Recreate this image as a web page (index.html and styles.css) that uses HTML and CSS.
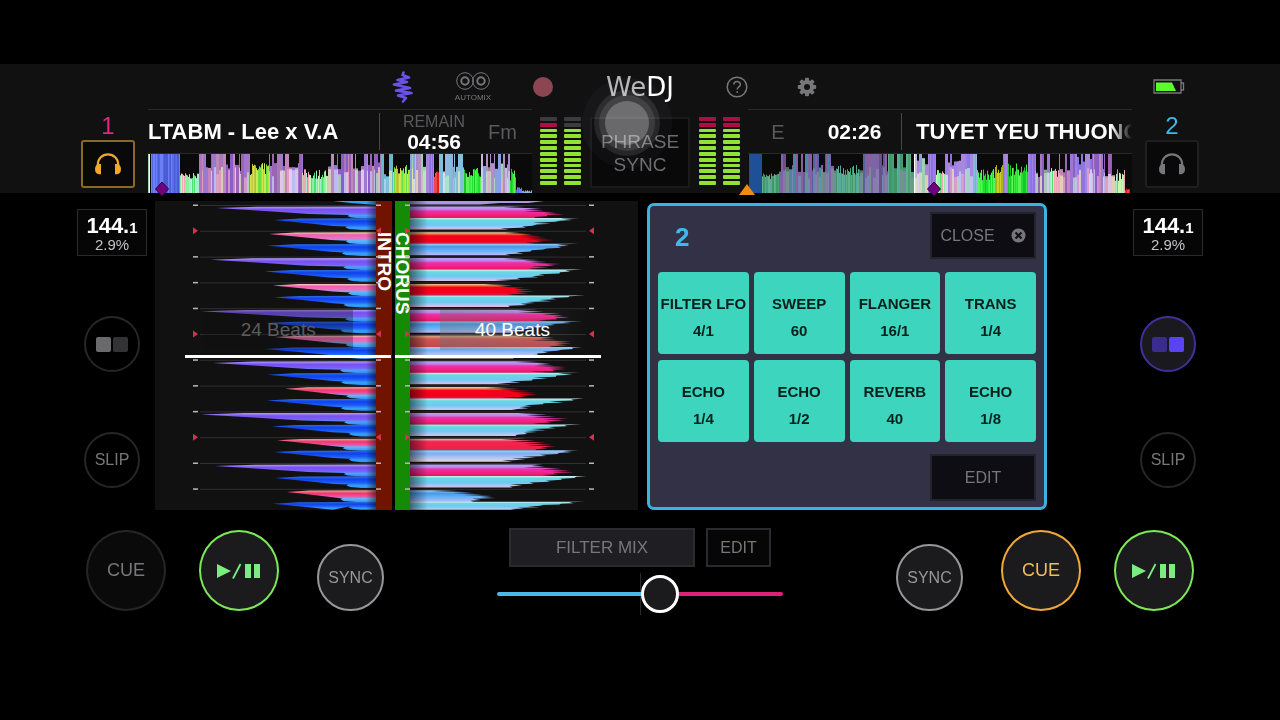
FILE: index.html
```html
<!DOCTYPE html>
<html lang="en">
<head>
    <meta charset="UTF-8">
    <meta name="viewport" content="width=device-width, initial-scale=1.0">
    <title>WeDJ</title>
    <link rel="stylesheet" href="styles.css">
</head>
<body>
    <!-- Shared icons -->
    <svg class="sprite" aria-hidden="true">
        <symbol id="icon-headphones" viewBox="0 0 26 22">
            <path d="M3.500 14 V11.500 A9.500 9.500 0 0 1 22.500 11.500 V14" fill="none" stroke="currentColor" stroke-width="2"/>
            <path d="M6.500 11 V20.500 H5 A4 4 0 0 1 1 16.500 V15 A4 4 0 0 1 5 11 Z M19.500 11 V20.500 H21 A4 4 0 0 0 25 16.500 V15 A4 4 0 0 0 21 11 Z" fill="currentColor"/>
        </symbol>
        <symbol id="icon-play" viewBox="0 0 44 16">
            <path d="M0 1 L14 8 L0 15 Z M28 1 h6 v14 h-6 Z M37 1 h6 v14 h-6 Z" fill="currentColor"/>
            <path d="M16 15.500 L23.500 1" stroke="currentColor" stroke-width="1.800"/>
        </symbol>
    </svg>

    <header class="top">
        <nav class="toolbar">
            <div class="tools tools-left">
                <button class="tool" aria-label="Waveform">
                    <svg width="22" height="32" viewBox="0 0 22 32"><path d="M11.500 1.500 L10.500 4 L17 6.500 L5.500 9 L15 11 L2 13.500 L18 17 L4 19.500 L19.500 22 L6 24.500 L14 27 L11 30.500" fill="none" stroke="#6a52e8" stroke-width="2.600" stroke-linejoin="round" stroke-linecap="round"/></svg>
                </button>
                <button class="tool automix">
                    <svg width="34" height="20" viewBox="0 0 34 20" fill="none" stroke="#77777a"><circle cx="9" cy="10" r="8.300"/><circle cx="25" cy="10" r="8.300"/><circle cx="9" cy="10" r="3.700" stroke-width="2"/><circle cx="25" cy="10" r="3.700" stroke-width="2"/></svg>
                    <span>AUTOMIX</span>
                </button>
                <button class="tool" aria-label="Record"><span class="record"></span></button>
            </div>
            <h1 class="logo">We<span>DJ</span></h1>
            <div class="tools">
                <button class="tool" aria-label="Help">
                    <svg width="22" height="22" viewBox="0 0 22 22" fill="none" stroke="#77777a" stroke-width="1.500"><circle cx="11" cy="11" r="9.800"/><path d="M7.800 8.600 C7.800 4.600 14.400 4.600 14.400 8.500 C14.400 10.800 11.200 11 11.200 13.600"/><path d="M11.200 15.300 v1.800"/></svg>
                </button>
                <button class="tool" aria-label="Settings">
                    <svg width="20" height="20" viewBox="-10 -10 20 20"><g fill="#77777a"><rect x="-2" y="-9.200" width="4" height="18.400" rx="1"/><rect x="-2" y="-9.200" width="4" height="18.400" rx="1" transform="rotate(45)"/><rect x="-2" y="-9.200" width="4" height="18.400" rx="1" transform="rotate(90)"/><rect x="-2" y="-9.200" width="4" height="18.400" rx="1" transform="rotate(135)"/><circle r="7"/></g><circle r="3" fill="#111112"/></svg>
                </button>
                <svg class="battery" width="32" height="16" viewBox="0 0 32 16"><path d="M1 1 h27 v13 h-27 Z M28 4 h2.500 v7 h-2.500" fill="none" stroke="#77777a" stroke-width="1.300"/><path d="M3 3.500 h16 l4 8.500 h-20 Z" fill="#5dfc2e"/></svg>
            </div>
        </nav>

        <div class="monitor monitor-1">
            <span class="deck-number">1</span>
            <button class="phones active" aria-label="Monitor deck 1"><svg width="28" height="24"><use href="#icon-headphones"/></svg></button>
        </div>

        <section class="track track-1">
            <div class="info">
                <h2 class="title">LTABM - Lee x V.A</h2>
                <div class="time"><small>REMAIN</small>04:56</div>
                <div class="key">Fm</div>
            </div>
            <svg class="overview" id="overview-1" viewBox="0 0 384 39" preserveAspectRatio="none"></svg>
        </section>

        <div class="mixer">
            <div class="meter" data-levels="or oo"></div>
            <button class="phrase">PHRASE SYNC</button>
            <div class="meter" data-levels="rr rr"></div>
            <span class="touch"></span>
        </div>

        <section class="track track-2">
            <div class="info">
                <div class="key">E</div>
                <div class="time">02:26</div>
                <h2 class="title">TUYET YEU THUONG</h2>
            </div>
            <svg class="overview" id="overview-2" viewBox="0 0 384 39" preserveAspectRatio="none"></svg>
        </section>

        <div class="monitor monitor-2">
            <span class="deck-number">2</span>
            <button class="phones" aria-label="Monitor deck 2"><svg width="28" height="24"><use href="#icon-headphones"/></svg></button>
        </div>
    </header>

    <main class="decks">
        <aside class="side">
            <div class="bpm"><strong>144.<small>1</small></strong>2.9%</div>
            <button class="round" aria-label="Deck 1 pads"><span class="pad-icon"></span></button>
            <button class="round">SLIP</button>
        </aside>

        <section class="waves">
            <svg class="wave" id="wave-1" viewBox="0 0 221 309" preserveAspectRatio="none"></svg>
            <div class="phase intro">INTRO</div>
            <div class="phase chorus">CHORUS</div>
            <svg class="wave" id="wave-2" viewBox="0 0 228 309" preserveAspectRatio="none"></svg>
            <div class="beats beats-1">24 Beats</div>
            <div class="beats beats-2">40 Beats</div>
        </section>

        <section class="panel">
            <div class="panel-row">
                <h3>2</h3>
                <button class="dark">CLOSE
                    <svg width="15" height="15" viewBox="0 0 15 15"><circle cx="7.500" cy="7.500" r="7" fill="#77777a"/><path d="M4.500 4.500 L10.500 10.500 M10.500 4.500 L4.500 10.500" stroke="#0e0d13" stroke-width="2"/></svg>
                </button>
            </div>
            <div class="pads">
                <button>FILTER LFO<span>4/1</span></button>
                <button>SWEEP<span>60</span></button>
                <button>FLANGER<span>16/1</span></button>
                <button>TRANS<span>1/4</span></button>
                <button>ECHO<span>1/4</span></button>
                <button>ECHO<span>1/2</span></button>
                <button>REVERB<span>40</span></button>
                <button>ECHO<span>1/8</span></button>
            </div>
            <div class="panel-row panel-end">
                <button class="dark">EDIT</button>
            </div>
        </section>

        <aside class="side side-right">
            <div class="bpm"><strong>144.<small>1</small></strong>2.9%</div>
            <button class="round selected" aria-label="Deck 2 pads"><span class="pad-icon"></span></button>
            <button class="round">SLIP</button>
        </aside>
    </main>

    <footer class="transport">
        <div class="buttons">
            <button class="big">CUE</button>
            <button class="big play" aria-label="Play or pause deck 1"><svg width="44" height="16"><use href="#icon-play"/></svg></button>
            <button class="sync">SYNC</button>
        </div>
        <div class="fader">
            <div class="fader-buttons">
                <button class="filter">FILTER MIX</button>
                <button class="edit">EDIT</button>
            </div>
            <input type="range" id="crossfader" min="0" max="100" value="58" aria-label="Crossfader">
        </div>
        <div class="buttons buttons-right">
            <button class="sync">SYNC</button>
            <button class="big cue-on">CUE</button>
            <button class="big play" aria-label="Play or pause deck 2"><svg width="44" height="16"><use href="#icon-play"/></svg></button>
        </div>
    </footer>

    <script src="script.js"></script>
</body>
</html>
```

FILE: styles.css
```css
* {
    box-sizing: border-box;
}
body {
    margin: 0;
    padding-top: 64px;
    background-color: #000;
    color: #fff;
    font-family: "Liberation Sans", Arial, sans-serif;
    font-size: 18px;
}
button {
    margin: 0;
    padding: 0;
    border: 0;
    background: none;
    color: #77777a;
    font-family: inherit;
    font-size: 18px;
    cursor: pointer;
}
h1, h2, h3 {
    margin: 0;
}
svg {
    display: block;
}
.sprite {
    position: absolute;
    width: 0;
    height: 0;
}

/* Header */
.top {
    display: grid;
    grid-template-columns: 148px minmax(0, 1fr) 216px minmax(0, 1fr) 148px;
    grid-template-rows: 45px 84px;
    background-color: #111112;
}
.toolbar {
    grid-column: 1 / -1;
    display: grid;
    grid-template-columns: 1fr 124px 1fr;
    align-items: center;
}
.tools {
    display: flex;
    align-items: center;
}
.tools-left {
    justify-content: flex-end;
}
.tool {
    display: flex;
    flex-direction: column;
    align-items: center;
    width: 70px;
}
.automix {
    font-size: 8px;
    gap: 2px;
}
.record {
    width: 20px;
    height: 20px;
    border-radius: 50%;
    background-color: #8c4652;
}
.logo {
    color: #b5b5b8;
    font-family: "DejaVu Sans", sans-serif;
    font-size: 26px;
    font-weight: normal;
    line-height: 28px;
    text-align: center;
}
.logo span {
    color: #fff;
}
.battery {
    margin-left: auto;
    margin-right: 95px;
}
.monitor {
    display: flex;
    flex-direction: column;
    align-items: center;
    width: 80px;
    padding-top: 3px;
}
.monitor-1 {
    justify-self: end;
    color: #e0287e;
}
.monitor-2 {
    color: #3fb8e8;
}
.deck-number {
    font-size: 24px;
    line-height: 28px;
}
.phones {
    display: flex;
    align-items: center;
    justify-content: center;
    width: 54px;
    height: 48px;
    border: 2px solid #1f1f22;
    border-radius: 3px;
    background-color: #09090a;
}
.phones.active {
    border-color: #8a6a22;
    color: #f0a828;
}
.track {
    display: flex;
    flex-direction: column;
}
.info {
    display: grid;
    align-items: center;
    height: 45px;
    border-top: 1px solid #2a2a2c;
    border-bottom: 1px solid #2a2a2c;
}
.track-1 .info {
    grid-template-columns: 1fr 108px 28px 16px;
}
.track-2 .info {
    grid-template-columns: 60px 93px 1fr;
}
.title {
    overflow: hidden;
    padding-top: 1px;
    font-size: 22px;
    line-height: 36px;
    white-space: nowrap;
}
.track-1 .title {
    border-right: 1px solid #48484a;
}
.track-2 .title {
    padding-left: 14px;
    border-left: 1px solid #48484a;
    mask-image: linear-gradient(to right, #000 91%, transparent);
}
.time {
    font-size: 21px;
    font-weight: bold;
    line-height: 20px;
    text-align: center;
}
.time small {
    display: block;
    color: #5a5a5c;
    font-size: 16px;
    font-weight: normal;
}
.key {
    padding-top: 2px;
    color: #5a5a5c;
    font-size: 20px;
    text-align: center;
}
.overview {
    width: 100%;
    height: 39px;
    overflow: visible;
}
.mixer {
    position: relative;
    display: flex;
    justify-content: space-between;
    padding: 8px;
}
.meter {
    display: flex;
    gap: 7px;
}
.meter div {
    display: flex;
    flex-direction: column;
    gap: 2px;
}
.meter i {
    width: 17px;
    height: 4px;
    border-radius: 1px;
    background-color: #92e234;
}
.meter .red {
    background-color: #b00d48;
}
.meter .off {
    background-color: #3c3c3e;
}
.phrase {
    width: 100px;
    height: 71px;
    border: 2px solid #1a1a1c;
    background-color: #09090a;
    color: #6c6c6e;
    font-size: 19px;
    line-height: 23px;
}
.touch {
    position: absolute;
    left: 73px;
    top: -8px;
    width: 44px;
    height: 44px;
    border-radius: 50%;
    background-color: #646466;
    box-shadow: 0 0 0 6px #343436, 0 0 0 11px #1e1e20, 0 0 0 23px #060607;
    mix-blend-mode: screen;
    pointer-events: none;
}

/* Decks */
.decks {
    display: grid;
    grid-template-columns: 155px minmax(0, 483fr) minmax(0, 409fr) 233px;
    padding-top: 8px;
}
.side {
    display: flex;
    flex-direction: column;
    align-items: center;
    gap: 60px;
    width: 70px;
    margin-left: 77px;
    padding-top: 8px;
}
.side-right {
    justify-self: end;
    margin-right: 77px;
}
.bpm {
    width: 70px;
    height: 47px;
    padding-top: 7px;
    border: 1px solid #2a2a2c;
    background-color: #060607;
    color: #c4c4c6;
    font-size: 15px;
    line-height: 15px;
    text-align: center;
}
.bpm strong {
    display: block;
    color: #fff;
    font-size: 22px;
    line-height: 18px;
}
.bpm small {
    font-size: 15px;
}
.round {
    display: flex;
    align-items: center;
    justify-content: center;
    width: 56px;
    height: 56px;
    border: 2px solid #262628;
    border-radius: 50%;
    font-size: 16px;
}
.pad-icon {
    display: flex;
    gap: 2px;
}
.pad-icon::before, .pad-icon::after {
    content: "";
    width: 15px;
    height: 15px;
    border-radius: 2px;
    background-color: #6a6a6c;
}
.pad-icon::after {
    background-color: #333335;
}
.selected {
    border-color: #42309a;
    background-color: #1a191f;
}
.selected .pad-icon::before {
    background-color: #392c8c;
}
.selected .pad-icon::after {
    background-color: #5a42f5;
}
.waves {
    position: relative;
    display: grid;
    grid-template-columns: minmax(0, 221fr) 16px 18px minmax(0, 228fr);
    background-color: #111112;
}
.wave {
    position: relative;
    z-index: 1;
    width: 100%;
    height: 309px;
    overflow: visible;
}
.phase {
    padding-top: 31px;
    font-size: 19px;
    font-weight: bold;
    line-height: 15px;
    writing-mode: vertical-rl;
}
.intro {
    background-color: #701400;
}
.chorus {
    border-left: 3px solid #000;
    background-color: #148a05;
}
.beats {
    position: absolute;
    z-index: 2;
    top: 109px;
    height: 40px;
    font-size: 19px;
    line-height: 40px;
    text-align: center;
}
.beats-1 {
    left: 10%;
    width: 31%;
    background-color: rgba(17, 17, 18, 0.3);
    color: #5c5c5e;
}
.beats-2 {
    left: 59%;
    width: 30%;
    background: linear-gradient(to right, rgba(110, 110, 115, 0.4), rgba(60, 60, 65, 0));
}
/* The playhead runs over both decks */
.playhead {
    fill: #fff;
}

/* Pad effects */
.panel {
    display: flex;
    flex-direction: column;
    justify-content: space-between;
    margin: 2px 0 0 9px;
    padding: 6px 8px;
    border: 3px solid #3cb2e0;
    border-radius: 7px;
    background-color: #323145;
}
.panel-row {
    display: flex;
    align-items: center;
    justify-content: space-between;
}
.panel-end {
    justify-content: flex-end;
}
.panel h3 {
    padding: 3px 0 0 17px;
    color: #3fb8f0;
    font-size: 26px;
}
.dark {
    display: flex;
    align-items: center;
    justify-content: center;
    gap: 16px;
    width: 106px;
    height: 47px;
    border: 2px solid #24232c;
    background-color: #0e0d13;
    font-size: 16px;
}
.pads {
    display: grid;
    grid-template-columns: repeat(4, 1fr);
    gap: 6px 5px;
}
.pads button {
    height: 82px;
    padding-top: 8px;
    border-radius: 4px;
    background-color: #3ed5be;
    color: #08201c;
    font-size: 15px;
    font-weight: bold;
    line-height: 27px;
    white-space: nowrap;
}
.pads span {
    display: block;
}

/* Transport */
.transport {
    display: grid;
    grid-template-columns: 1fr 286px 1fr;
    padding: 18px 86px 0;
}
.buttons {
    display: flex;
    align-items: flex-start;
    gap: 33px;
    padding-top: 2px;
}
.buttons-right {
    justify-content: flex-end;
}
.big {
    display: flex;
    align-items: center;
    justify-content: center;
    width: 80px;
    height: 81px;
    border: 2px solid #262628;
    border-radius: 50%;
    background-color: #0a0a0b;
}
.play {
    border-color: #7ce858;
    background-color: #1b1b1d;
    color: #7cec80;
}
.cue-on {
    border-color: #f0a838;
    background-color: #1b1b1d;
    color: #f0bc60;
}
.sync {
    width: 67px;
    height: 67px;
    margin: 14px 0 0 5px;
    border: 2px solid #98989a;
    border-radius: 50%;
    background-color: #1b1b1d;
    color: #98989a;
    font-size: 16px;
}
.buttons-right .sync {
    margin: 14px 5px 0 0;
}
.fader-buttons {
    display: flex;
    gap: 11px;
    padding: 0 12px;
}
.filter, .edit {
    height: 39px;
    border: 2px solid #2b2b2f;
}
.filter {
    flex: 1;
    background-color: #1f1e23;
    font-size: 17px;
}
.edit {
    width: 65px;
    background-color: #060607;
    font-size: 16px;
}
#crossfader {
    display: block;
    width: 100%;
    height: 42px;
    margin: 6px 0 0;
    appearance: none;
    background: linear-gradient(#2a2a2c, #2a2a2c) 50% 0 / 1px 100% no-repeat;
}
#crossfader::-webkit-slider-runnable-track {
    height: 4px;
    border-radius: 2px;
    background: linear-gradient(to right, #4cb8ea 57%, #e0217a 57%);
}
#crossfader::-webkit-slider-thumb {
    appearance: none;
    width: 38px;
    height: 38px;
    margin-top: -17px;
    border: 3px solid #fff;
    border-radius: 50%;
    background-color: #1b1b1d;
}
```

FILE: script.js
```js
// small seeded generator so the waveforms look the same on every load
let seed = 7;
function rnd() {
    seed = (seed * 16807) % 2147483647;
    return seed / 2147483647;
}

function pick(list) {
    return list[Math.floor(rnd() * list.length)];
}

const mixes = {
    blue: ['#5a6ee8', '#4c5cd6', '#6a80f4', '#5468e4'],
    purple: ['#9c64b4', '#a878b8', '#8c5cc8', '#c088b8', '#9c78d0'],
    pale: ['#c8b8dc', '#a888d0', '#b490c0', '#8ca0e0', '#a0d0b0'],
    green: ['#50e070', '#8cf09c', '#c8f8b0', '#f0a8b8', '#a0f0d0'],
    lime: ['#a8e838', '#d0e850', '#68e048', '#c4c83c'],
    vivid: ['#20e030', '#38f040', '#60f058', '#18c828'],
    yellow: ['#b8c820', '#ccd028', '#a8b418'],
    violet: ['#9070e0', '#a080e8', '#8c78e4', '#a888dc'],
    sky: ['#80c0d8', '#90b8e0', '#68b8c8', '#a0a8e0'],
    dimgreen: ['#48a078', '#60b088', '#409868', '#58a8a0'],
    dim: ['#70508c', '#8860a0', '#4888a0', '#7c64a8', '#5860a0'],
    red: ['#e02020', '#f04848'],
    navy: ['#1e5098']
};
const bright = ['#f4ecf8', '#f0a8c8', '#b8f4c0', '#f0f0b0', '#c8d8ff'];
const dull = ['#70a088', '#7098b8', '#8c88b0'];

// [start, end, lowest bar, highest bar, colours]
const overview1 = [
    [0, 2, 39, 39, 'pale'], [3, 32, 39, 39, 'blue'], [32, 51, 14, 20, 'green'],
    [51, 102, 24, 52, 'purple'], [102, 121, 18, 30, 'lime'], [121, 155, 26, 52, 'purple'],
    [155, 180, 14, 24, 'green'], [180, 233, 26, 52, 'purple'], [233, 245, 20, 48, 'sky'],
    [245, 262, 18, 28, 'lime'], [262, 278, 28, 52, 'pale'], [278, 286, 39, 39, 'violet'],
    [286, 291, 16, 22, 'red'], [291, 315, 24, 54, 'sky'], [315, 333, 16, 26, 'vivid'],
    [333, 362, 26, 54, 'pale'], [362, 368, 12, 26, 'vivid'], [368, 374, 3, 6, 'blue'], [374, 384, 1, 3, 'sky']
];
const overview2 = [
    [1, 14, 39, 39, 'navy'], [14, 31, 14, 20, 'dimgreen'], [31, 88, 24, 54, 'dim'],
    [88, 111, 18, 28, 'dimgreen'], [111, 140, 24, 52, 'dim'], [140, 167, 22, 46, 'dimgreen'],
    [167, 180, 30, 54, 'pale'], [180, 188, 39, 39, 'violet'], [188, 197, 18, 24, 'green'],
    [197, 225, 30, 60, 'violet'], [225, 229, 39, 39, 'sky'], [229, 247, 12, 24, 'vivid'],
    [247, 255, 20, 28, 'yellow'], [255, 260, 39, 39, 'violet'], [260, 280, 16, 30, 'vivid'],
    [280, 287, 39, 39, 'violet'], [287, 302, 20, 46, 'purple'], [302, 311, 16, 26, 'green'],
    [311, 327, 24, 54, 'purple'], [327, 344, 32, 60, 'violet'], [344, 367, 20, 54, 'purple'],
    [367, 377, 12, 24, 'green'], [377, 382, 2, 5, 'red']
];

function drawOverview(id, parts, marks, playedTo) {
    let out = '<rect width="384" height="39" fill="#0a0a0b"/>';
    parts.forEach(([from, to, low, high, mix]) => {
        let x = from;
        while (x < to) {
            // busy parts switch between full bars and short ones
            const busy = high > 44;
            const w = Math.min(to - x, busy ? pick([1, 2, 2, 3]) : 1);
            let h = low + rnd() * (high - low);
            if (busy) {
                h = rnd() < 0.65 ? 39 : low - 4 + rnd() * 9;
            }
            h = Math.min(39, h);
            out += `<rect x="${x}" y="${39 - h}" width="${w}" height="${h}" fill="${pick(mixes[mix])}"/>`;
            if (busy && rnd() > 0.45) {
                const b = 14 + rnd() * 12;
                out += `<rect x="${x}" y="${39 - b}" width="${w}" height="${b}" fill="${pick(x < playedTo ? dull : bright)}" opacity="0.7"/>`;
            }
            x += w;
        }
    });
    document.getElementById(id).innerHTML = out + marks;
}

function diamond(x) {
    return `<path d="M${x} 28 l6.500 7 l-6.500 7 l-6.500 -7 Z" fill="#700080" stroke="#30003a"/>`;
}

drawOverview('overview-1', overview1, '<rect x="1" width="1" height="39" fill="#fff"/>' + diamond(14), 0);
drawOverview('overview-2', overview2,
    '<rect x="166" width="1" height="39" fill="#fff"/>' + diamond(186) + '<path d="M-9 41 L-1 30 L7 41 Z" fill="#f08a10"/>', 166);

// Level meters: one letter for each of the top two lamps
document.querySelectorAll('.meter').forEach(meter => {
    meter.innerHTML = meter.dataset.levels.split(' ').map(top => {
        const lamps = [...top].map(c => `<i class="${c === 'r' ? 'red' : 'off'}"></i>`).join('');
        return `<div>${lamps}${'<i></i>'.repeat(10)}</div>`;
    }).join('');
});

// Beat grid
const BEAT = 25.8;
const FIRST = 4;
const barStarts = [1, 5, 9];

function gradient(id, stops) {
    return `<linearGradient id="${id}" x1="0" y1="0" x2="0" y2="1">` +
        stops.map(([at, color]) => `<stop offset="${at}" stop-color="${color}"/>`).join('') + '</linearGradient>';
}

function marker(i, x, y, dir) {
    if (barStarts.includes(i)) {
        return `<path d="M${x} ${y - 3.5} l${5 * dir} 3.5 l${-5 * dir} 3.5 Z" fill="#d83050"/>`;
    }
    return `<rect x="${dir > 0 ? x : x - 5}" y="${y - 0.5}" width="5" height="1.5" fill="#b8b8ba"/>`;
}

// Deck 1: the waves grow to the left, [tip, fill] for each beat
const beats1 = [
    [62, 'purple'], [114, 'pink'], [56, 'purple'], [118, 'pink'], [46, 'purple'], [120, 'pink'],
    [58, 'purple'], [130, 'rose'], [46, 'purple'], [122, 'rose'], [60, 'purple'], [132, 'rose']
];

function wedge(tip, y, h, fill) {
    const span = 221 - tip;
    const mid = 184 + rnd() * 10;
    return `<path d="M${tip} ${y + 1.6} L${tip + span * 0.25} ${y + 0.2} L221 ${y} V${y + h} H206 ` +
        `L${mid + 4} ${y + h - 1} L${mid} ${y + h - 2.5} L${mid + 2} ${y + h - 3.5} L${tip + span * 0.58} ${y + 7.6} L${tip + span * 0.3} ${y + 4.6} Z" fill="url(#${fill})"/>`;
}

let left = '<defs>' +
    gradient('purple', [[0, '#b8a0f8'], [0.25, '#7850f4'], [0.55, '#7a60f4'], [0.75, '#50a0f8'], [1, '#2888f8']]) +
    gradient('pink', [[0, '#f8d8b8'], [0.2, '#f060b0'], [0.5, '#f070c0'], [0.65, '#60b8f8'], [1, '#40a0f8']]) +
    gradient('rose', [[0, '#f0a890'], [0.25, '#f03870'], [0.5, '#f050a0'], [0.7, '#60b8f8'], [1, '#3090f8']]) +
    gradient('deep', [[0, '#3070e0'], [0.25, '#1040f0'], [0.55, '#1c60f8'], [0.8, '#38a0f8'], [1, '#2c90f0']]) +
    '<linearGradient id="edge1"><stop offset="0" stop-color="#000" stop-opacity="0"/><stop offset="1" stop-color="#000" stop-opacity="0.5"/></linearGradient></defs>' +
    '<path d="M178 0 H221 V4 L196 2 Z" fill="#38a0f0"/>';
beats1.forEach(([tip, fill], i) => {
    const y = FIRST + i * BEAT;
    left += `<rect x="45" y="${y}" width="176" height="1" fill="#303032"/>`;
    left += wedge(tip, y + 1.5, 12, fill);
    left += wedge(108 + rnd() * 12, y + 13.3, i === 11 ? 7.7 : 11.8, 'deep');
    left += marker(i, 38, y, 1) + marker(i, 226, y, -1);
});
left += '<rect x="211" width="10" height="309" fill="url(#edge1)"/>' +
    '<rect class="playhead" x="30" y="154" width="206" height="3"/>';
document.getElementById('wave-1').innerHTML = left;

// Deck 2: the waves grow to the right, [reach, first half, second half]
const beats2 = [
    [154, 'magenta', 'cyan'], [146, 'red', 'azure'], [152, 'magenta', 'cyan'], [132, 'red', 'cyan'],
    [164, 'magenta', 'azure'], [166, 'brick', 'lav'], [162, 'magenta', 'cyan'], [132, 'red', 'cyan'],
    [160, 'magenta', 'cyan'], [150, 'crimson', 'lav'], [164, 'magenta', 'cyan'], [84, 'azure', 'cyan']
];

function band(y, h, reach, peak, slope, fill) {
    const rows = 6;
    let edge = '';
    for (let r = 0; r <= rows; r++) {
        const t = r / rows;
        const x = reach - Math.abs(t - peak) * slope + (rnd() - 0.5) * 10;
        edge += ` L${x} ${y + t * h}`;
        if (r < rows) {
            edge += ` L${x - 10 - rnd() * 16} ${y + (t + 0.07) * h}`;
        }
    }
    return `<path d="M0 ${y}${edge} L0 ${y + h} Z" fill="url(#${fill})"/>`;
}

let right = '<defs>' +
    gradient('magenta', [[0, '#b8a8f4'], [0.25, '#c080e8'], [0.4, '#f030a8'], [0.75, '#f02080'], [1, '#e01858']]) +
    gradient('red', [[0, '#f0d8a0'], [0.2, '#f05030'], [0.3, '#f40018'], [0.8, '#f0001c'], [1, '#c83070']]) +
    gradient('crimson', [[0, '#f0c8c0'], [0.25, '#f02850'], [0.8, '#f02048'], [1, '#b83870']]) +
    gradient('brick', [[0, '#e0b088'], [0.3, '#cc5850'], [1, '#c04850']]) +
    gradient('cyan', [[0, '#d8f0f4'], [0.2, '#68d8e0'], [0.6, '#70c8f4'], [0.85, '#b0c8f4'], [1, '#f0b8d8']]) +
    gradient('azure', [[0, '#a0d0f4'], [0.25, '#4898e8'], [0.6, '#68b4f8'], [1, '#c0b8f8']]) +
    gradient('lav', [[0, '#a0d0f8'], [0.3, '#78b0f0'], [0.7, '#b8c8f4'], [1, '#e8d8c8']]) +
    '<linearGradient id="edge2"><stop offset="0" stop-color="#000" stop-opacity="0.5"/><stop offset="1" stop-color="#000" stop-opacity="0"/></linearGradient></defs>' +
    '<path d="M0 0 H134 L118 2 H90 L70 3.5 H0 Z" fill="#a898e0"/>';
beats2.forEach(([reach, first, second], i) => {
    const y = FIRST + i * BEAT;
    right += `<rect y="${y}" width="176" height="1" fill="#303032"/>`;
    right += band(y + 1.5, 11.6, reach, 0.6, 60, first);
    right += band(y + 13, i === 11 ? 8 : 11.5, 172, 0, 70, second);
    right += marker(i, 184, y, -1) + marker(i, -5, y, 1);
});
right += '<rect width="18" height="309" fill="url(#edge2)"/>' +
    '<rect class="playhead" x="-15" y="154" width="206" height="3"/>';
document.getElementById('wave-2').innerHTML = right;
```
